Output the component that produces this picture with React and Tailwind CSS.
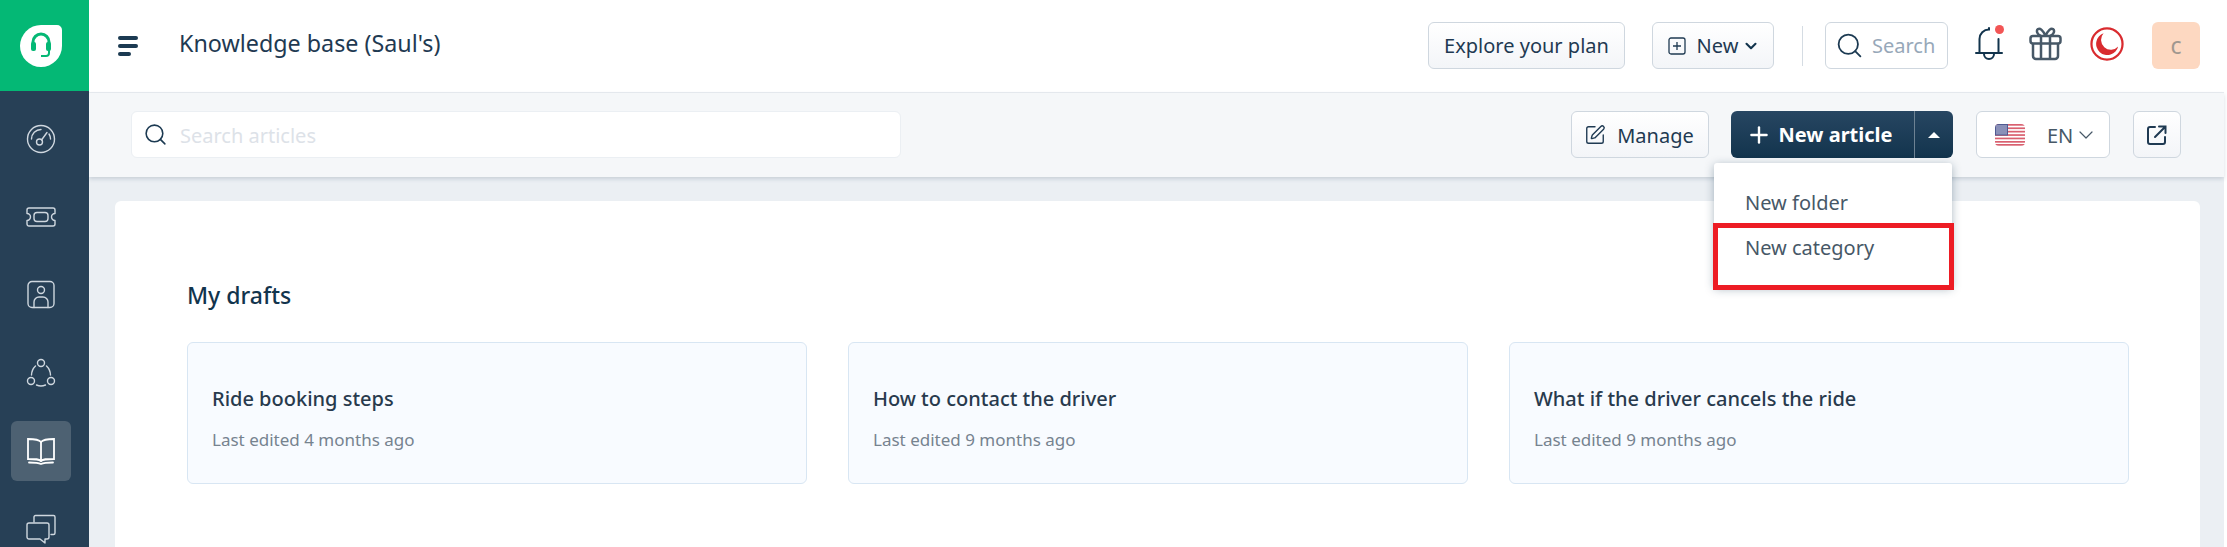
import { ChevronDown, Search, SquarePen, Plus } from 'lucide-react';

const drafts = [
  { title: 'Ride booking steps', edited: 'Last edited 4 months ago' },
  { title: 'How to contact the driver', edited: 'Last edited 9 months ago' },
  { title: 'What if the driver cancels the ride', edited: 'Last edited 9 months ago' },
];

function Logo() {
  return (
    <svg width="42" height="42" viewBox="0 0 42 42">
      <path d="M21 0H37a5 5 0 0 1 5 5V21A21 21 0 0 1 0 21A21 21 0 0 1 21 0Z" fill="#fff" />
      <path d="M13 24V17a8 8 0 0 1 16 0V24" fill="none" stroke="#04b875" strokeWidth="3" />
      <rect x="11" y="17" width="5" height="9" rx="2" fill="#04b875" />
      <rect x="26" y="17" width="5" height="9" rx="2" fill="#04b875" />
      <path d="M29 25v3a3 3 0 0 1-3 3h-5" fill="none" stroke="#04b875" strokeWidth="2" />
    </svg>
  );
}

function NavIcon({ children }) {
  return (
    <svg width="30" height="30" viewBox="0 0 30 30" fill="none" stroke="currentColor" strokeWidth="1.4" strokeLinecap="round" strokeLinejoin="round">
      {children}
    </svg>
  );
}

const navIcons = [
  <NavIcon key="dash">
    <circle cx="15" cy="15" r="13.5" />
    <path d="M5.500 15A9.500 9.500 0 0 1 15 5.500" />
    <circle cx="13.500" cy="18" r="3" />
    <path d="M15.500 16L21 8.500" />
    <path d="M24.500 15a9.500 9.500 0 0 0-1.500-5" />
  </NavIcon>,
  <NavIcon key="ticket">
    <path d="M3 6h24a2 2 0 0 1 2 2v3.500a3.500 3.500 0 0 0 0 7V22a2 2 0 0 1-2 2H3a2 2 0 0 1-2-2v-3.500a3.500 3.500 0 0 0 0-7V8a2 2 0 0 1 2-2Z" />
    <rect x="8" y="10.500" width="14" height="9" rx="3" />
  </NavIcon>,
  <NavIcon key="contact">
    <rect x="2" y="1.500" width="26" height="26" rx="4" />
    <circle cx="15" cy="10" r="3.500" />
    <path d="M8 27.500V22a5 5 0 0 1 5-5h4a5 5 0 0 1 5 5v5.500" />
  </NavIcon>,
  <NavIcon key="network">
    <circle cx="15" cy="5" r="3.500" />
    <circle cx="5" cy="23" r="3.500" />
    <circle cx="25" cy="23" r="3.500" />
    <path d="M9.500 8a13 13 0 0 0-4 9" />
    <path d="M20.500 8a13 13 0 0 1 4 9" />
    <path d="M10.500 27a11 11 0 0 0 9 0" />
  </NavIcon>,
  <NavIcon key="book">
    <path d="M15 6C13 3.500 10 3 2 3v20c8 0 11 0 13 2 2-2 5-2 13-2V3c-8 0-11 .5-13 3Z" strokeLinejoin="miter" strokeWidth="1.800" />
    <path d="M15 6V25" strokeWidth="1.800" />
    <path d="M3 26.500c6 0 9 0 12 1.500 3-1.500 6-1.500 12-1.500" strokeWidth="1.800" />
  </NavIcon>,
  <NavIcon key="chat">
    <path d="M8 8V3a1.500 1.500 0 0 1 1.500-1.500H27.500A1.500 1.500 0 0 1 29 3V19a1.500 1.500 0 0 1-1.500 1.500H25" />
    <path d="M3 9h18a2 2 0 0 1 2 2v12a2 2 0 0 1-2 2h-2v4l-5-4H3a2 2 0 0 1-2-2V11a2 2 0 0 1 2-2Z" />
  </NavIcon>,
];

function Sidebar() {
  return (
    <aside className="w-[89px] shrink-0 h-[547px] bg-[#274056] overflow-hidden pr-[7px]">
      <div className="h-[91px] bg-[#04b875] -mr-[7px] pr-[7px] flex items-center justify-center">
        <Logo />
      </div>
      <div className="flex flex-col items-center gap-[18px] pt-[18px]">
        {navIcons.map((icon, i) => (
          <div
            key={i}
            className={`w-[60px] h-[60px] shrink-0 rounded-md flex items-center justify-center ${
              i === 4 ? 'bg-[#4d6172] text-white' : 'text-[#cfd7df]'
            }`}
          >
            {icon}
          </div>
        ))}
      </div>
    </aside>
  );
}

function Flag() {
  return (
    <svg width="30" height="22" viewBox="0 0 30 22" className="rounded-sm">
      <rect width="30" height="22" fill="#fff" />
      {[0, 3.4, 6.8, 10.2, 13.6, 17, 20].map((y) => (
        <rect key={y} y={y} width="30" height="1.700" fill="#d9606f" />
      ))}
      <rect width="13" height="11.500" fill="#4f5a92" />
      <rect x="1" y="1" width="11" height="9.500" fill="#8a90b8" />
    </svg>
  );
}

function Topbar() {
  return (
    <header className="h-[93px] shrink-0 bg-white border-b border-[#e8ecf0] flex items-center pb-[1px]">
      <div className="w-[30px] ml-[29px] flex flex-col gap-[4px]">
        <span className="block h-[4px] w-[20px] rounded-full bg-[#1c3a52]" />
        <span className="block h-[4px] w-[20px] rounded-full bg-[#1c3a52]" />
        <span className="block h-[4px] w-[13px] rounded-full bg-[#1c3a52]" />
      </div>
      <h1 className="ml-[31px] -mt-[3px] text-[23.3px] text-[#1f3a52] leading-none">Knowledge base (Saul's)</h1>
      <div className="ml-auto flex items-center h-[47px] pr-[24px]">
        <button className="h-[47px] w-[197px] rounded-md border border-[#cfd7df] bg-gradient-to-b from-white to-[#f3f5f8] text-[20px] text-[#1f3a52]">
          Explore your plan
        </button>
        <button className="ml-[27px] h-[47px] w-[122px] rounded-md border border-[#cfd7df] bg-gradient-to-b from-white to-[#f3f5f8] text-[20px] text-[#1f3a52] flex items-center justify-center">
          <svg width="18" height="18" viewBox="0 0 18 18" fill="none" stroke="#1f3a52" strokeWidth="1.300">
            <rect x="1" y="1" width="16" height="16" rx="2" />
            <path d="M9 5v8M5 9h8" />
          </svg>
          <span className="ml-[11px]">New</span>
          <ChevronDown size={18} strokeWidth={2.800} className="ml-[4px] -mr-[2px] text-[#12344d]" />
        </button>
        <span className="ml-[28px] h-[40px] w-px bg-[#d5dce3]" />
        <div className="ml-[22px] h-[47px] w-[123px] rounded-md border border-[#cfd7df] bg-white flex items-center pl-[9px]">
          <Search size={29} strokeWidth={1.500} className="text-[#1c3a52]" />
          <span className="ml-[8px] text-[20px] text-[#97a8b9]">Search</span>
        </div>
        <div className="relative ml-[27px] w-[28px] h-[33px] mt-[-4px]">
          <svg width="28" height="33" viewBox="0 0 28 33" fill="none" stroke="#12344d" strokeWidth="2" strokeLinecap="round">
            <path d="M1 26H27" />
            <path d="M4.500 26V12A9.500 9.500 0 0 1 14 2.500V1" />
            <path d="M23.500 26V12" />
            <path d="M9 27a5 5 0 0 0 10 0" />
          </svg>
          <span className="absolute right-[-1px] top-[-2px] w-[9px] h-[9px] rounded-full bg-[#f25555]" />
        </div>
        <svg className="ml-[26px] mt-[-4px]" width="33" height="34" viewBox="0 0 33 34" fill="none" stroke="#475867" strokeWidth="2.500" strokeLinejoin="round">
          <rect x="1.500" y="9" width="30" height="7.500" rx="2.500" />
          <path d="M4 16.500V29a3 3 0 0 0 3 3h19a3 3 0 0 0 3-3V16.500" />
          <path d="M12 9v23M21 9v23" />
          <path d="M16.500 9C14 3 11 1 9 2c-2 1.500-1 6 3 7M16.500 9C19 3 22 1 24 2c2 1.500 1 6-3 7" />
        </svg>
        <svg className="ml-[28px] mt-[-4px]" width="34" height="34" viewBox="0 0 35 35">
          <circle cx="17.500" cy="17.500" r="16" fill="none" stroke="#d92b2f" strokeWidth="2.300" />
          <path d="M14 6.500A11.500 11.500 0 1 0 29 20a9.500 9.500 0 0 1-15-13.500Z" fill="#d92b2f" />
        </svg>
        <div className="ml-[28px] w-[48px] h-[47px] rounded-md bg-[#fdd8c1] flex items-center justify-center text-[#a0978f] text-[23px] leading-none">
          c
        </div>
      </div>
    </header>
  );
}

function Toolbar() {
  return (
    <div className="relative z-10 h-[84px] shrink-0 bg-[#f5f7f9] shadow-[0_2px_4px_rgba(60,85,110,0.2)] flex items-center pl-[42px] pr-[43px] pb-[1px]">
      <div className="w-[770px] h-[47px] rounded-md border border-[#ebeff3] bg-white flex items-center pl-[11px]">
        <Search size={25} strokeWidth={1.500} className="text-[#1c3a52]" />
        <span className="ml-[12px] mt-[2px] text-[20px] text-[#dde2e8]">Search articles</span>
      </div>
      <button className="ml-auto h-[47px] w-[138px] rounded-md border border-[#cfd7df] bg-gradient-to-b from-white to-[#f3f5f8] text-[20px] text-[#1f3a52] flex items-center justify-center">
        <SquarePen size={22} strokeWidth={1.500} className="-ml-[2px]" />
        <span className="ml-[11px] mt-[2px]">Manage</span>
      </button>
      <div className="relative ml-[22px] flex h-[47px] w-[222px]">
        <button className="w-[183px] pr-[4px] rounded-l-md bg-gradient-to-b from-[#274662] to-[#12344d] text-[20px] font-bold text-white flex items-center justify-center">
          <Plus size={26} strokeWidth={2.200} className="-ml-[3px]" />
          <span className="ml-[7px]">New article</span>
        </button>
        <button className="w-[39px] rounded-r-md border-l border-[#6d8293] bg-gradient-to-b from-[#274662] to-[#12344d] flex items-center justify-center">
          <span className="block w-0 h-0 border-x-[6px] border-x-transparent border-b-[6px] border-b-white" />
        </button>
        <div className="absolute z-20 right-[1px] top-[52px] w-[238px] h-[124px] rounded-[3px] bg-white shadow-[0_2px_10px_rgba(18,52,77,0.35)] text-[20px] text-[#475867]">
          <div className="pl-[31px] pt-[25px] leading-[30px]">New folder</div>
          <div className="pl-[31px] pt-[15px] leading-[30px]">New category</div>
        </div>
        <div className="absolute z-30 right-[-1px] top-[112px] w-[241px] h-[67px] border-[5px] border-[#ed1c24]" />
      </div>
      <div className="ml-[23px] h-[47px] w-[134px] rounded-md border border-[#cfd7df] bg-white flex items-center pl-[18px] text-[#475867]">
        <Flag />
        <span className="ml-[22px] mt-[2px] text-[20px]">EN</span>
        <ChevronDown size={24} strokeWidth={1.200} className="ml-[1px]" />
      </div>
      <button className="ml-[23px] h-[47px] w-[48px] rounded-md border border-[#cfd7df] bg-gradient-to-b from-white to-[#f3f5f8] flex items-center justify-center text-[#1f3a52]">
        <svg width="20" height="20" viewBox="0 0 20 20" fill="none" stroke="currentColor" strokeWidth="2" strokeLinecap="round">
          <path d="M8 2H3a2 2 0 0 0-2 2v13a2 2 0 0 0 2 2h13a2 2 0 0 0 2-2v-5" />
          <path d="M8 12L18 2M12 1.500h6.500V8" />
        </svg>
      </button>
    </div>
  );
}

export default function App() {
  return (
    <div className="flex h-[547px] w-[2227px] overflow-hidden bg-white font-['Noto_Sans',sans-serif]">
      <Sidebar />
      <div className="flex-1 min-w-0 flex flex-col mr-[3px]">
        <Topbar />
        <Toolbar />
        <main className="flex-1 bg-[#ebeff3] pl-[26px] pr-[24px] pt-[24px]">
          <div className="h-full rounded-t-md bg-white pl-[72px] pr-[71px] pt-[79px]">
            <h2 className="text-[23px] leading-[30px] font-medium text-[#12344d]">My drafts</h2>
            <div className="mt-[32px] grid grid-cols-3 gap-[41px]">
              {drafts.map((d) => (
                <div key={d.title} className="h-[142px] rounded-md border border-[#d8e6f3] bg-[#f8fbff] pl-[24px] pt-[41px]">
                  <div className="text-[20px] leading-[30px] font-medium text-[#283a4d]">{d.title}</div>
                  <div className="mt-[14px] text-[17px] leading-[24px] text-[#76838f]">{d.edited}</div>
                </div>
              ))}
            </div>
          </div>
        </main>
      </div>
    </div>
  );
}
